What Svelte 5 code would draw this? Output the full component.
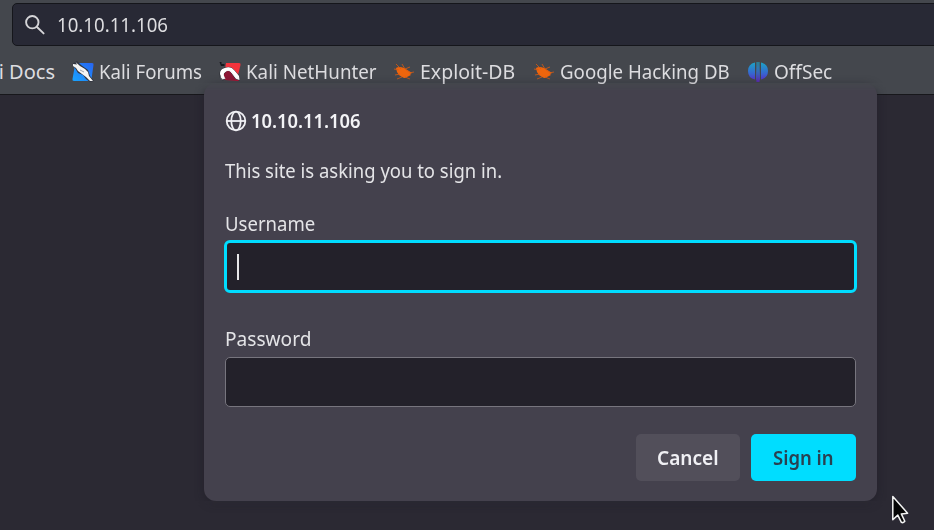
<script>
  const bookmarks = [
    { label: 'Kali Forums', icon: 'forums', width: 103.5, gap: 16 },
    { label: 'Kali NetHunter', icon: 'hunter', width: 130.5, gap: 17 },
    { label: 'Exploit-DB', icon: 'bug', width: 95.5, gap: 17 },
    { label: 'Google Hacking DB', icon: 'bug', width: 170, gap: 17 },
    { label: 'OffSec', icon: 'offsec', width: 58, gap: 0 }
  ];

  // Condenses a label horizontally so its advance equals the given width.
  function fit(node, width) {
    const inner = node.firstElementChild;
    inner.style.transform = `scaleX(${width / inner.offsetWidth})`;
  }
</script>

{#snippet label(text, width)}
  <span class="label" style="width: {width}px" use:fit={width}><span>{text}</span></span>
{/snippet}

<div class="browser">
  <header>
    <div class="urlbar">
      <svg width="22" height="22" viewBox="0 0 22 22" fill="none" stroke="#d5d5d8" stroke-width="1.9" stroke-linecap="round">
        <circle cx="8.3" cy="8.2" r="6.2" /><path d="m13 13 6.6 6.4" />
      </svg>
      <div class="url">{@render label('10.10.11.106', 111)}</div>
    </div>
    <nav>
      <div class="docs">{@render label('Kali Docs', 85)}</div>
      {#each bookmarks as b}
        <div class="bookmark" style="margin-right: {b.gap}px">
          <svg width="22" height="22" viewBox="0 0 22 22">
            {#if b.icon === 'forums'}
              <defs><linearGradient id="blue" x1="1" y1="0" x2="0" y2="1"><stop stop-color="#2864f2" /><stop offset="1" stop-color="#18a4ff" /></linearGradient></defs>
              <path d="M5 2h15q2 0 1.5 2l-2 14q-.3 2-2 2H2q-2 0-1.500-2L3 4q.2-2 2-2Z" fill="url(#blue)" />
              <path d="M1 2.500 5 0l4 4 7 5 2 6 4 5-4 1-4-3-3-4-5-2-3-5Z" fill="#30343f" />
              <path d="m1 3 4 .5L3.500 1 8 5l5 3 3 3 1 4 4 5h-3l-4-4-4-3-4-3-2-3-3-2Z" fill="#f4f4f4" />
              <path d="m8 9 4 2" stroke="#9ca0aa" />
            {:else if b.icon === 'hunter'}
              <path d="M7 2h13q2 0 1.500 2l-3 12H5Z" fill="#f3333c" />
              <path d="M3 10q-1 8 3 9l14 1-3-6-6-3Z" fill="#b90e32" />
              <path d="M.5 1h2v2h3v2H2Z" fill="#17181e" />
              <path d="M1 13q0-5 5-6 6-2 9 2l5 6 .5 4-4-1-3-4q-3-5-6-3-3 1-3 4l2 3-3 1q-3-2-2.500-6Z" fill="#f2f2f2" stroke="#20212a" stroke-width=".8" />
              <path d="m6 17-.5-4q2-5 6-2l5 8H8Z" fill="#8c1735" />
              <path d="M1 13q0-5 5-6 6-2 9 2l5 6 .5 4-3-1-3-5q-4-6-8-3-3 2-1 6l1 2-3-1Z" fill="#fff" />
            {:else if b.icon === 'bug'}
              <path d="M3 7q3-2 8 0l5 3 3 2-2 1 1 1-4 2q-2 2-5 0-4-2-5-5Z" fill="#ef650c" />
              <path d="m1 8 5 1m-3-6 5 5m1-5 3 5 4 3M2 14l5-1m-3 5 5-2m3 0 5 2m-1-6 5-1m-9-3 5-2" fill="none" stroke="#d85a12" stroke-width=".8" />
            {:else}
              <defs><linearGradient id="sec" gradientUnits="userSpaceOnUse" x1="0" y1="1" x2="0" y2="21"><stop stop-color="#1ba6c5" /><stop offset=".55" stop-color="#3569d0" /><stop offset="1" stop-color="#6024c9" /></linearGradient></defs>
              <path d="M8 1.500v17Q1 17 1 10T8 1.500Zm6 0v17q7-1.500 7-8.500t-7-8.500Z" fill="url(#sec)" />
              <path d="M9.600 1H10l.2 19q-1.200-1-1-3Zm2.800 0H12l-.2 19q1.200-1 1-3Z" fill="url(#sec)" />
              <path d="M10.300 1h1.400l.9 20H9.400Z" fill="url(#sec)" opacity=".8" />
            {/if}
          </svg>
          {@render label(b.label, b.width)}
        </div>
      {/each}
    </nav>
  </header>

  <section class="dialog">
    <h1>
      <svg width="22" height="22" viewBox="0 0 22 22" fill="none" stroke="#f0f0f4" stroke-width="1.8">
        <circle cx="11" cy="11" r="9.300" /><ellipse cx="11" cy="11" rx="4.700" ry="9.300" /><path d="M1.700 11h18.600" />
      </svg>
      {@render label('10.10.11.106', 110)}
    </h1>
    <p>{@render label('This site is asking you to sign in.', 277)}</p>
    <div class="name">{@render label('Username', 90)}</div>
    <div class="field focused"><i></i></div>
    <div class="name second">{@render label('Password', 86)}</div>
    <div class="field"></div>
    <footer>
      <button class="cancel">{@render label('Cancel', 62)}</button>
      <button class="signin">{@render label('Sign in', 61)}</button>
    </footer>
  </section>

  <svg class="cursor" width="20" height="30" viewBox="0 0 20 30">
    <path d="M1.800 1.500v23.200l5-4.600 3.600 7.300q1.800.8 3.400-1.100l-3.500-7.400 6.300-.7Z" fill="#050505" stroke="#f4f4f4" stroke-width="1.500" stroke-linejoin="round" />
  </svg>
</div>

<style>
  .browser { position: relative; width: 934px; height: 530px; overflow: hidden; background: #2b2933; color: #dddde0; font: 20px/28px "Noto Sans", "Open Sans", sans-serif; }
  .label { display: inline-block; flex: none; white-space: nowrap; }
  .label > span { display: inline-block; transform-origin: 0 50%; }
  header { box-sizing: border-box; height: 95px; padding-top: 3px; background: #44474d; border-bottom: 1px solid #17171b; }
  .urlbar { box-sizing: border-box; display: flex; align-items: center; width: 940px; height: 43px; margin-left: 12px; padding: 1px 0 0 11px; border: 1px solid #15161b; border-radius: 5px; background: #282935; }
  .url { margin-left: 11px; }
  nav { display: flex; align-items: center; height: 28px; margin-top: 12px; }
  .docs { margin: 0 17px 0 -30px; }
  .bookmark { display: flex; align-items: center; gap: 5px; }
  svg { display: block; flex: none; }
  .dialog { position: absolute; left: 204px; top: 83px; box-sizing: border-box; width: 673px; height: 418px; padding: 23px 21px 21px; border-radius: 12px; background: #44414d; box-shadow: 0 2px 9px #1c1a2480; color: #e4e4e7; -webkit-mask: linear-gradient(transparent -1px, #000 9px) 0 0 / 100% 100% no-repeat; mask: linear-gradient(transparent -1px, #000 9px); mask-clip: no-clip; }
  h1 { display: flex; align-items: center; gap: 4px; height: 30px; margin: 0; color: #f3f3f6; font-size: 20px; font-weight: 600; }
  p { height: 28px; margin: 21px 0 0; }
  .name { height: 28px; margin-top: 25px; }
  .name.second { margin-top: 32px; }
  .field { box-sizing: border-box; height: 50px; margin: 4px 0 0; border: 1px solid #77757e; border-radius: 5px; background: #23212a; }
  .field.focused { height: 53px; margin: 2px -1px 0; padding: 11px 0 0 10px; border: 3px solid #00ddff; border-radius: 6px; }
  i { display: block; width: 1.500px; height: 26px; background: #e7e7e9; }
  footer { display: flex; justify-content: flex-end; gap: 11px; margin-top: 27px; }
  button { height: 47px; padding: 0; border: 0; border-radius: 5px; font: 600 20px/28px "Noto Sans", sans-serif; text-align: center; }
  button .label, button :global(.label) { text-align: left; }
  .cancel { width: 104px; background: #524f5a; color: #f0f0f4; }
  .signin { width: 105px; background: #00ddff; color: #294151; }
  .cursor { position: absolute; left: 891px; top: 495px; }
</style>
